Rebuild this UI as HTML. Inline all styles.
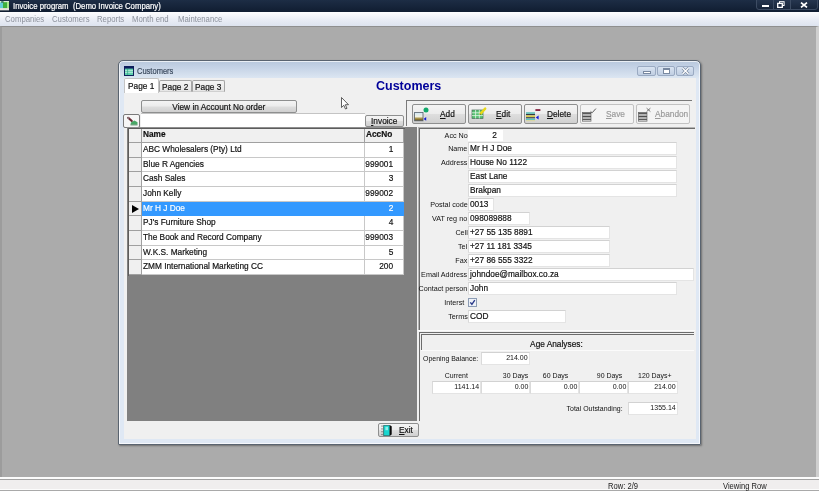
<!DOCTYPE html>
<html><head><meta charset="utf-8"><title>Invoice program</title>
<style>
*{box-sizing:border-box;margin:0;padding:0}
html,body{width:819px;height:491px;overflow:hidden;background:#ababab;font-family:"Liberation Sans",sans-serif;color:#111}
#root{position:absolute;left:0;top:0;width:819px;height:491px;overflow:hidden;will-change:transform}
.a{position:absolute}
.x{display:inline-block;white-space:nowrap;-webkit-text-stroke:0.2px currentColor}
#titlebar{left:0;top:0;width:819px;height:12px;background:linear-gradient(#1d2d45,#101d31)}
#titlebar .t{left:13px;top:0;color:#fff;font-size:8.6px;line-height:12px;white-space:nowrap}
#menubar{left:0;top:12px;width:819px;height:14px;background:linear-gradient(#fdfdfe,#e9edf5 55%,#dde3ef)}
#menubar span{position:absolute;top:0;font-size:9px;line-height:15px;transform:scaleX(.862);transform-origin:left center;color:#8c919c;white-space:nowrap}
#mdi{left:0;top:26px;width:819px;height:451px;background:#ababab;border-top:1px solid #8f8f8f;border-left:2px solid #9c9c9c;border-right:3px solid #cfcfcf}
#status{left:0;top:477px;width:819px;height:14px;background:#f0eeee;border-top:2px solid #fcfcfc;border-bottom:1px solid #a9a9a9;box-shadow:inset 0 1px 0 #a2a2a2,inset 0 -1px 0 #fcfcfc}
#status span{position:absolute;top:1px;font-size:9px;line-height:12px;color:#222;white-space:nowrap;transform:scaleX(.844);transform-origin:left center}
#win{left:118px;top:60px;width:583px;height:385px;background:linear-gradient(#b8c8dc,#c4d2e5 6px,#dce6f2 17px,#dfe8f4 18px,#dfe8f4);border:1px solid #5a6470;border-radius:5px 5px 1px 1px;box-shadow:1px 1px 2px rgba(0,0,0,.35),inset 0 0 0 1px rgba(255,255,255,.7)}
.lbl .x,.lb2 .x,.num .x{-webkit-text-stroke:0}
.lbl{position:absolute;font-size:8px;line-height:10px;color:#111;white-space:nowrap;text-align:right}
.lb2{position:absolute;font-size:7.4px;line-height:10px;color:#111;white-space:nowrap;text-align:right}
.inp{position:absolute;background:#fff;border:1px solid #e4e4e4;border-top-color:#d2d2d2;border-left-color:#dadada;font-size:9.6px;line-height:12px;color:#111;white-space:nowrap;padding-left:1px;overflow:hidden}
.num{text-align:right;padding-right:1px;font-size:7.4px;line-height:10px}
.btn{position:absolute;border:1px solid #8e8f8f;border-radius:2px;background:linear-gradient(#f4f4f4,#ececec 48%,#dedede 52%,#d0d0d0);font-size:9.6px;color:#111;white-space:nowrap;text-align:center}
.row{position:absolute;left:0;font-size:9.6px;white-space:nowrap}
.row div{position:absolute;top:0;height:100%}
.row .i{left:0;width:13px;background:#f0f0f0;border-right:1px solid #a0a0a0;border-bottom:1px solid #a0a0a0}
.row .n{left:13px;width:223px;background:#fff;border-right:1px solid #c8c8c8;border-bottom:1px solid #c8c8c8;padding-left:1px}
.row .c{left:236px;width:39px;background:#fff;border-right:1px solid #c8c8c8;border-bottom:1px solid #c8c8c8;text-align:right;padding-right:10px}
.row.h .n,.row.h .c{font-weight:bold;background:#f0f0f0;border-color:#a0a0a0}
.row.h .c{text-align:left;padding-left:1px;padding-right:0}
.row.s .n,.row.s .c{background:#3399ff;color:#fff;border-color:#3399ff}
.cb{border:1px solid #9aaac2;border-radius:2px;background:linear-gradient(#d8e3f1,#c0cee2)}
.tab{border:1px solid #a4a4a4;border-bottom-color:#d0d0d0;border-radius:2px 2px 0 0;background:linear-gradient(#f4f4f4,#e6e6e6);font-size:9.6px;line-height:12px;text-align:center;white-space:nowrap;overflow:hidden}
.tb{text-align:left}
.tb .l{position:absolute;top:0;line-height:18px;font-size:9.6px}
.dis{border-color:#c2c2c2;background:#f4f4f4;color:#9a9a9a}
.ln{position:absolute;background:#6c6c6c}
</style></head><body>
<div id="root">
<div class="a" id="titlebar">
 <svg class="a" style="left:0;top:0" width="11" height="12" viewBox="0 0 11 12"><rect x="0" y="1" width="9" height="9.2" fill="#dcecd6"/><rect x="0" y="2.4" width="3.2" height="5.8" fill="#62cfd6"/><rect x="3" y="2.2" width="4.2" height="6" fill="#3fb03c"/><rect x="7" y="2" width="2" height="6.2" fill="#a6e88c"/><rect x="1.2" y="1.2" width="2.4" height="1.6" fill="#2f6f5a"/><rect x="0" y="8.4" width="9" height="1.8" fill="#e6e0dc"/></svg>
 <div class="a t"><span class="x" style="transform-origin:left center;transform:scaleX(.902)">Invoice program&nbsp; (Demo Invoice Company)</span></div>
 <div class="a" style="left:756px;top:-1px;width:62px;height:11px;border:1px solid #3d4c63;border-radius:0 0 3px 3px;background:linear-gradient(#26364f,#17253a)"></div>
 <div class="a" style="left:773px;top:0;width:1px;height:9px;background:#3d4c63"></div><div class="a" style="left:790px;top:0;width:1px;height:9px;background:#3d4c63"></div>
 <div class="a" style="left:762px;top:5px;width:7px;height:2px;background:#fff"></div>
 <svg class="a" style="left:777px;top:1px" width="8" height="7" viewBox="0 0 8 7"><rect x="2.5" y="0.7" width="4.6" height="3.8" fill="none" stroke="#fff" stroke-width="1"/><rect x="0.7" y="2.4" width="4.6" height="4" fill="#1c2a42" stroke="#fff" stroke-width="1.3"/></svg>
 <svg class="a" style="left:800px;top:2px" width="8" height="6" viewBox="0 0 8 6"><path d="M1 0.6l6 4.8M7 0.6l-6 4.8" stroke="#fff" stroke-width="1.7"/></svg>
</div>
<div class="a" id="menubar"><span style="left:5px">Companies</span><span style="left:52px">Customers</span><span style="left:97px">Reports</span><span style="left:132px">Month end</span><span style="left:178px">Maintenance</span></div>
<div class="a" id="mdi"></div>
<div class="a" id="status"><span style="left:608px">Row: 2/9</span><span style="left:723px">Viewing Row</span></div>
<div class="a" id="win"></div>
<svg class="a" style="left:124px;top:66px" width="10" height="10" viewBox="0 0 10 10"><rect x="0.5" y="0.5" width="9" height="9" fill="#5fcfae" stroke="#10245a"/><rect x="0" y="0" width="10" height="2.6" fill="#0c1d5c"/><path d="M1 4.6h8M1 6.4h8" stroke="#d6f5e6" stroke-width="0.7"/><path d="M3.6 3v6" stroke="#2f9f86" stroke-width="0.7"/></svg>
<div class="a" style="left:137px;top:66px;font-size:9px;line-height:11px;color:#3b4a5e"><span class="x" style="transform-origin:left center;transform:scaleX(0.835)">Customers</span></div>
<div class="a cb" style="left:637px;top:66px;width:19px;height:10px"><div class="a" style="left:5px;top:4px;width:8px;height:3px;border:1px solid #7888a0;background:#fff"></div></div>
<div class="a cb" style="left:657px;top:66px;width:18px;height:10px"><div class="a" style="left:5px;top:1px;width:7px;height:6px;border:1px solid #7888a0;border-top-width:2px;background:#fff"></div></div>
<div class="a cb" style="left:676px;top:66px;width:18px;height:10px"><svg style="position:absolute;left:4px;top:0" width="9" height="8" viewBox="0 0 9 8"><path d="M1.5 1l6 6M7.5 1l-6 6" stroke="#7888a0" stroke-width="2.6"/><path d="M1.5 1l6 6M7.5 1l-6 6" stroke="#fff" stroke-width="1.3"/></svg></div>
<div class="a" id="client" style="left:124px;top:78px;width:572px;height:361px;background:#f0f0f0"></div>
<div class="a tab" style="left:124px;top:78px;width:35px;height:15px;background:#fff;border-color:#c5c5c5;border-bottom:0;line-height:13px"><span class="x" style="transform-origin:center center;transform:scaleX(0.865)">Page 1</span></div>
<div class="a tab" style="left:159px;top:80px;width:33px;height:12px;line-height:11px"><span class="x" style="transform-origin:center center;transform:scaleX(0.865)">Page 2</span></div>
<div class="a tab" style="left:192px;top:80px;width:33px;height:12px;line-height:11px"><span class="x" style="transform-origin:center center;transform:scaleX(0.865)">Page 3</span></div>
<div class="a" style="left:376px;top:77px;font-size:12.5px;line-height:18px;font-weight:bold;color:#000099">Customers</div>
<div class="btn" style="left:141px;top:100px;width:156px;height:13px;line-height:11px"><span class="x" style="transform-origin:center center;transform:scaleX(0.865)">View in Account No order</span></div>
<div class="btn" style="left:123px;top:114px;width:17px;height:14px;background:#f6f6f6;border-color:#7a7a7a"><svg style="position:absolute;left:2px;top:1px" width="12" height="10" viewBox="0 0 12 10"><path d="M2.2 1.8l3.6 3.2" stroke="#6a2a34" stroke-width="2.2" stroke-linecap="round"/><circle cx="2.3" cy="1.9" r="1" fill="#8a7a80"/><path d="M4.5 8.6h7V6.2L8.4 4.6 5 6.6z" fill="#49a866"/><path d="M4.5 8.9h7" stroke="#2f7a48" stroke-width="0.8"/></svg></div>
<div class="a" style="left:141px;top:113px;width:224px;height:15px;background:#fff;border-top:1px solid #c4c4c4"></div>
<div class="btn" style="left:365px;top:115px;width:39px;height:12px;line-height:10px"><span class="x" style="transform-origin:center center;transform:scaleX(0.865)"><u>I</u>nvoice</span></div>
<svg class="a" style="left:341px;top:97px" width="9" height="13" viewBox="0 0 9 13"><path d="M0.5 0.5v10l2.3-2.2 1.7 3.7 1.5-.7-1.7-3.6h3.2z" fill="#fff" stroke="#2e2e2e" stroke-width="0.75"/></svg>
<div class="a" id="grid" style="left:127px;top:127px;width:290px;height:294px;background:#808080;border:2px solid #808080;border-right:0;border-bottom:0"><div class="ln" style="left:-1px;top:-1px;width:277px;height:1px;background:#5c5c5c"></div><div class="ln" style="left:-2px;top:-2px;width:278px;height:1px;background:#8e8e8e"></div><div class="ln" style="left:-1px;top:-1px;width:1px;height:148px;background:#5c5c5c"></div>
<div class="row h" style="top:0;height:14px;line-height:9px"><div class="i"></div><div class="n"><span class="x" style="transform-origin:left center;transform:scaleX(0.865)">Name</span></div><div class="c"><span class="x" style="transform-origin:left center;transform:scaleX(0.865)">AccNo</span></div></div>
<div class="row" style="top:14px;height:15px;line-height:11px"><div class="i"></div><div class="n"><span class="x" style="transform-origin:left center;transform:scaleX(0.865)">ABC Wholesalers (Pty) Ltd</span></div><div class="c"><span class="x" style="position:absolute;right:10px;top:0;transform-origin:right center;transform:scaleX(0.865)">1</span></div></div>
<div class="row" style="top:29px;height:14px;line-height:11px"><div class="i"></div><div class="n"><span class="x" style="transform-origin:left center;transform:scaleX(0.865)">Blue R Agencies</span></div><div class="c"><span class="x" style="position:absolute;right:10px;top:0;transform-origin:right center;transform:scaleX(0.865)">999001</span></div></div>
<div class="row" style="top:43px;height:15px;line-height:11px"><div class="i"></div><div class="n"><span class="x" style="transform-origin:left center;transform:scaleX(0.865)">Cash Sales</span></div><div class="c"><span class="x" style="position:absolute;right:10px;top:0;transform-origin:right center;transform:scaleX(0.865)">3</span></div></div>
<div class="row" style="top:58px;height:15px;line-height:11px"><div class="i"></div><div class="n"><span class="x" style="transform-origin:left center;transform:scaleX(0.865)">John Kelly</span></div><div class="c"><span class="x" style="position:absolute;right:10px;top:0;transform-origin:right center;transform:scaleX(0.865)">999002</span></div></div>
<div class="row s" style="top:73px;height:14px;line-height:11px"><div class="i"><svg style="position:absolute;left:3px;top:3px" width="7" height="8" viewBox="0 0 7 8"><path d="M0 0L7 4L0 8Z" fill="#000"/></svg></div><div class="n"><span class="x" style="transform-origin:left center;transform:scaleX(0.865)">Mr H J Doe</span></div><div class="c"><span class="x" style="position:absolute;right:10px;top:0;transform-origin:right center;transform:scaleX(0.865)">2</span></div></div>
<div class="row" style="top:87px;height:15px;line-height:11px"><div class="i"></div><div class="n"><span class="x" style="transform-origin:left center;transform:scaleX(0.865)">PJ's Furniture Shop</span></div><div class="c"><span class="x" style="position:absolute;right:10px;top:0;transform-origin:right center;transform:scaleX(0.865)">4</span></div></div>
<div class="row" style="top:102px;height:15px;line-height:11px"><div class="i"></div><div class="n"><span class="x" style="transform-origin:left center;transform:scaleX(0.865)">The Book and Record Company</span></div><div class="c"><span class="x" style="position:absolute;right:10px;top:0;transform-origin:right center;transform:scaleX(0.865)">999003</span></div></div>
<div class="row" style="top:117px;height:14px;line-height:11px"><div class="i"></div><div class="n"><span class="x" style="transform-origin:left center;transform:scaleX(0.865)">W.K.S. Marketing</span></div><div class="c"><span class="x" style="position:absolute;right:10px;top:0;transform-origin:right center;transform:scaleX(0.865)">5</span></div></div>
<div class="row" style="top:131px;height:15px;line-height:11px"><div class="i"></div><div class="n"><span class="x" style="transform-origin:left center;transform:scaleX(0.865)">ZMM International Marketing CC</span></div><div class="c"><span class="x" style="position:absolute;right:10px;top:0;transform-origin:right center;transform:scaleX(0.865)">200</span></div></div>
</div>
<div class="ln" style="left:406px;top:100px;width:286px;height:1px;background:#7a7a7a"></div>
<div class="ln" style="left:406px;top:100px;width:1px;height:26px;background:#7a7a7a"></div>
<div class="btn tb" style="left:412px;top:104px;width:54px;height:20px"><svg style="position:absolute;left:1px;top:2px" width="17" height="15" viewBox="0 0 17 15"><defs><linearGradient id="ga" x1="0" y1="0" x2="0" y2="1"><stop offset="0" stop-color="#cfe6f7"/><stop offset=".5" stop-color="#f2f2e2"/><stop offset=".75" stop-color="#a08a3a"/><stop offset="1" stop-color="#5a4a20"/></linearGradient></defs><rect x="0.6" y="5.4" width="8.4" height="8.4" fill="url(#ga)" stroke="#55606a" stroke-width="0.8"/><circle cx="12" cy="3" r="2.5" fill="#10a86a"/><path d="M12.2 10v3.8l-2.6-1.9z" fill="#1018d8"/></svg><span class="l" style="left:27px"><span class="x" style="transform-origin:left center;transform:scaleX(0.865)"><u>A</u>dd</span></span></div>
<div class="btn tb" style="left:468px;top:104px;width:54px;height:20px"><svg style="position:absolute;left:2px;top:1px" width="17" height="15" viewBox="0 0 17 15"><rect x="1" y="4" width="11" height="8.5" fill="#55c070" stroke="#4a6a5a" stroke-width="0.7"/><path d="M1 6.8h11M1 9.6h11M4.6 4v8.5M8.3 4v8.5" stroke="#e4f6e8" stroke-width="0.8"/><path d="M9.6 7.6l4.6-5" stroke="#e8d818" stroke-width="2.4" stroke-linecap="round"/><path d="M8.6 8.8l1.4-.4-.9-1z" fill="#333"/></svg><span class="l" style="left:27px"><span class="x" style="transform-origin:left center;transform:scaleX(0.865)"><u>E</u>dit</span></span></div>
<div class="btn tb" style="left:524px;top:104px;width:54px;height:20px"><svg style="position:absolute;left:0px;top:2px" width="17" height="15" viewBox="0 0 17 15"><rect x="1" y="5.4" width="9" height="1.3" fill="#38b0a8"/><rect x="1" y="7" width="9" height="1.2" fill="#333a44"/><rect x="1" y="8.5" width="9" height="1.4" fill="#d8c838"/><rect x="1" y="10.2" width="9" height="1.2" fill="#333a44"/><rect x="1" y="11.7" width="9" height="1.4" fill="#58c8c0"/><rect x="1" y="13.3" width="9" height="0.9" fill="#e0d890"/><rect x="10.4" y="2.2" width="5" height="1.7" fill="#7a1030"/><path d="M13.6 8.6v4l-2.8-2z" fill="#1018d8"/></svg><span class="l" style="left:22px"><span class="x" style="transform-origin:left center;transform:scaleX(0.865)"><u>D</u>elete</span></span></div>
<div class="btn tb dis" style="left:580px;top:104px;width:54px;height:20px"><svg style="position:absolute;left:0px;top:2px" width="17" height="15" viewBox="0 0 17 15"><rect x="1.4" y="5.6" width="8.6" height="8.6" fill="#f2f2f2" stroke="#6a6a6a" stroke-width="0.7"/><rect x="1.4" y="5.6" width="8.6" height="1.8" fill="#5a5a5a"/><rect x="1.4" y="8.6" width="8.6" height="1.8" fill="#4e4e4e"/><rect x="1.4" y="11.6" width="8.6" height="1.6" fill="#5a5a5a"/><path d="M9.6 4.4l1.5 1.4 3.8-4.2" fill="none" stroke="#4a4a4a" stroke-width="0.9"/></svg><span class="l" style="left:25px"><span class="x" style="transform-origin:left center;transform:scaleX(0.865)"><u>S</u>ave</span></span></div>
<div class="btn tb dis" style="left:636px;top:104px;width:54px;height:20px"><svg style="position:absolute;left:0px;top:2px" width="17" height="15" viewBox="0 0 17 15"><rect x="1.4" y="5.6" width="8.6" height="8.6" fill="#f2f2f2" stroke="#6a6a6a" stroke-width="0.7"/><rect x="1.4" y="5.6" width="8.6" height="1.8" fill="#5a5a5a"/><rect x="1.4" y="8.6" width="8.6" height="1.8" fill="#4e4e4e"/><rect x="1.4" y="11.6" width="8.6" height="1.6" fill="#5a5a5a"/><path d="M9.6 1.2l3.8 3.4M13.4 1.2l-3.8 3.4" fill="none" stroke="#555" stroke-width="0.8"/></svg><span class="l" style="left:18px"><span class="x" style="transform-origin:left center;transform:scaleX(0.865)"><u>A</u>bandon</span></span></div>
<div class="ln" style="left:418px;top:128px;width:277px;height:1px"></div><div class="ln" style="left:418px;top:127px;width:277px;height:1px;background:#b4b4b4"></div>
<div class="ln" style="left:419px;top:128px;width:1px;height:202px"></div><div class="ln" style="left:418px;top:128px;width:1px;height:202px;background:#b4b4b4"></div>
<div class="ln" style="left:418px;top:330px;width:277px;height:1px;background:#fbfbfb"></div>
<div class="lbl" style="left:397.5px;width:70px;top:131px"><span class="x" style="transform-origin:right center;transform:scaleX(0.9)">Acc No</span></div>
<div class="lbl" style="left:397.5px;width:70px;top:144px"><span class="x" style="transform-origin:right center;transform:scaleX(0.9)">Name</span></div>
<div class="inp" style="left:468px;top:141.5px;width:209px;height:13px;line-height:9px"><span class="x" style="transform-origin:left center;transform:scaleX(0.865)">Mr H J Doe</span></div>
<div class="lbl" style="left:397.5px;width:70px;top:158px"><span class="x" style="transform-origin:right center;transform:scaleX(0.9)">Address</span></div>
<div class="inp" style="left:468px;top:155.5px;width:209px;height:13px;line-height:9px"><span class="x" style="transform-origin:left center;transform:scaleX(0.865)">House No 1122</span></div>
<div class="inp" style="left:468px;top:169.5px;width:209px;height:13px;line-height:9px"><span class="x" style="transform-origin:left center;transform:scaleX(0.865)">East Lane</span></div>
<div class="inp" style="left:468px;top:183.5px;width:209px;height:13px;line-height:9px"><span class="x" style="transform-origin:left center;transform:scaleX(0.865)">Brakpan</span></div>
<div class="lbl" style="left:397.5px;width:70px;top:200px"><span class="x" style="transform-origin:right center;transform:scaleX(0.9)">Postal code</span></div>
<div class="inp" style="left:468px;top:197.5px;width:26px;height:13px;line-height:9px"><span class="x" style="transform-origin:left center;transform:scaleX(0.865)">0013</span></div>
<div class="lbl" style="left:397.5px;width:70px;top:214px"><span class="x" style="transform-origin:right center;transform:scaleX(0.9)">VAT reg no</span></div>
<div class="inp" style="left:468px;top:211.5px;width:62px;height:13px;line-height:9px"><span class="x" style="transform-origin:left center;transform:scaleX(0.865)">098089888</span></div>
<div class="lbl" style="left:397.5px;width:70px;top:228px"><span class="x" style="transform-origin:right center;transform:scaleX(0.9)">Cell</span></div>
<div class="inp" style="left:468px;top:225.5px;width:142px;height:13px;line-height:9px"><span class="x" style="transform-origin:left center;transform:scaleX(0.865)">+27 55 135 8891</span></div>
<div class="lbl" style="left:397.5px;width:70px;top:242px"><span class="x" style="transform-origin:right center;transform:scaleX(0.9)">Tel</span></div>
<div class="inp" style="left:468px;top:239.5px;width:142px;height:13px;line-height:9px"><span class="x" style="transform-origin:left center;transform:scaleX(0.865)">+27 11 181 3345</span></div>
<div class="lbl" style="left:397.5px;width:70px;top:256px"><span class="x" style="transform-origin:right center;transform:scaleX(0.9)">Fax</span></div>
<div class="inp" style="left:468px;top:253.5px;width:142px;height:13px;line-height:9px"><span class="x" style="transform-origin:left center;transform:scaleX(0.865)">+27 86 555 3322</span></div>
<div class="lbl" style="left:397.5px;width:70px;top:270px"><span class="x" style="transform-origin:right center;transform:scaleX(0.9)">Email Address</span></div>
<div class="inp" style="left:468px;top:267.5px;width:226px;height:13px;line-height:9px"><span class="x" style="transform-origin:left center;transform:scaleX(0.865)">johndoe@mailbox.co.za</span></div>
<div class="lbl" style="left:397.5px;width:70px;top:284px"><span class="x" style="transform-origin:right center;transform:scaleX(0.9)">Contact person</span></div>
<div class="inp" style="left:468px;top:281.5px;width:209px;height:13px;line-height:9px"><span class="x" style="transform-origin:left center;transform:scaleX(0.865)">John</span></div>
<div class="lbl" style="left:394.5px;width:70px;top:298px"><span class="x" style="transform-origin:right center;transform:scaleX(0.9)">Interst</span></div>
<div class="lbl" style="left:397.5px;width:70px;top:312px"><span class="x" style="transform-origin:right center;transform:scaleX(0.9)">Terms</span></div>
<div class="inp" style="left:468px;top:309.5px;width:98px;height:13px;line-height:9px"><span class="x" style="transform-origin:left center;transform:scaleX(0.865)">COD</span></div>
<div class="inp" style="left:468px;top:130px;width:35px;height:11px;line-height:10px;text-align:center;padding-left:18px;border:0"><span class="x" style="transform-origin:center center;transform:scaleX(0.865)">2</span></div>
<div class="a" style="left:468px;top:298px;width:9px;height:9px;border:1px solid #8c9cb4;background:#eef2f8"><svg style="position:absolute;left:0;top:0" width="7" height="7" viewBox="0 0 7 7"><path d="M1.3 3.4L2.9 5.3L5.8 1.2" fill="none" stroke="#2a3a8a" stroke-width="1.4"/></svg></div>
<div class="ln" style="left:419px;top:332px;width:275px;height:1px"></div>
<div class="ln" style="left:419px;top:332px;width:1px;height:89px"></div>
<div class="ln" style="left:421px;top:334px;width:273px;height:1px"></div>
<div class="ln" style="left:421px;top:334px;width:1px;height:16px"></div>
<div class="ln" style="left:421px;top:350px;width:273px;height:1px;background:#fbfbfb"></div>
<div class="a" style="left:420px;top:338px;width:273px;text-align:center;font-size:9.6px;line-height:12px"><span class="x" style="transform-origin:center center;transform:scaleX(0.865)">Age Analyses:</span></div>
<div class="lb2" style="left:423px;top:354px;text-align:left"><span class="x" style="transform-origin:left center;transform:scaleX(0.94)">Opening Balance:</span></div>
<div class="inp num" style="left:481px;top:352px;width:49px;height:13px"><span class="x" style="transform-origin:right center;transform:scaleX(0.95)">214.00</span></div>
<div class="lb2" style="left:425px;width:63px;top:371px;text-align:center"><span class="x" style="transform-origin:center center;transform:scaleX(0.94)">Current</span></div>
<div class="lb2" style="left:483px;width:66px;top:371px;text-align:center"><span class="x" style="transform-origin:center center;transform:scaleX(0.94)">30 Days</span></div>
<div class="lb2" style="left:523px;width:66px;top:371px;text-align:center"><span class="x" style="transform-origin:center center;transform:scaleX(0.94)">60 Days</span></div>
<div class="lb2" style="left:577px;width:66px;top:371px;text-align:center"><span class="x" style="transform-origin:center center;transform:scaleX(0.94)">90 Days</span></div>
<div class="lb2" style="left:618px;width:74px;top:371px;text-align:center"><span class="x" style="transform-origin:center center;transform:scaleX(0.94)">120 Days+</span></div>
<div class="inp num" style="left:432px;top:381px;width:49px;height:13px"><span class="x" style="transform-origin:right center;transform:scaleX(0.95)">1141.14</span></div>
<div class="inp num" style="left:481px;top:381px;width:49px;height:13px"><span class="x" style="transform-origin:right center;transform:scaleX(0.95)">0.00</span></div>
<div class="inp num" style="left:530px;top:381px;width:49px;height:13px"><span class="x" style="transform-origin:right center;transform:scaleX(0.95)">0.00</span></div>
<div class="inp num" style="left:579px;top:381px;width:49px;height:13px"><span class="x" style="transform-origin:right center;transform:scaleX(0.95)">0.00</span></div>
<div class="inp num" style="left:628px;top:381px;width:50px;height:13px"><span class="x" style="transform-origin:right center;transform:scaleX(0.95)">214.00</span></div>
<div class="lb2" style="left:540px;width:83px;top:404px"><span class="x" style="transform-origin:right center;transform:scaleX(0.94)">Total Outstanding:</span></div>
<div class="inp num" style="left:628px;top:402px;width:50px;height:13px"><span class="x" style="transform-origin:right center;transform:scaleX(0.95)">1355.14</span></div>
<div class="btn" style="left:378px;top:423px;width:41px;height:14px;line-height:12px;text-align:left;padding-left:20px"><svg style="position:absolute;left:2px;top:1px" width="13" height="11" viewBox="0 0 13 11"><path d="M1 0.5v10" stroke="#333" stroke-width="0.8" stroke-dasharray="1.2 1.6"/><path d="M2.6 0.3h6.2v10.4h-6.2z" fill="#18d6cf" stroke="#123a3a" stroke-width="0.6"/><rect x="4.4" y="1.8" width="2.6" height="3.4" fill="#8ff0ea"/><path d="M8.8 0.3l1.9 0.9v8.4l-1.9 1.1z" fill="#0a0a0a"/></svg><span class="x" style="transform-origin:left center;transform:scaleX(0.865)"><u>E</u>xit</span></div>
</div>
</body></html>
